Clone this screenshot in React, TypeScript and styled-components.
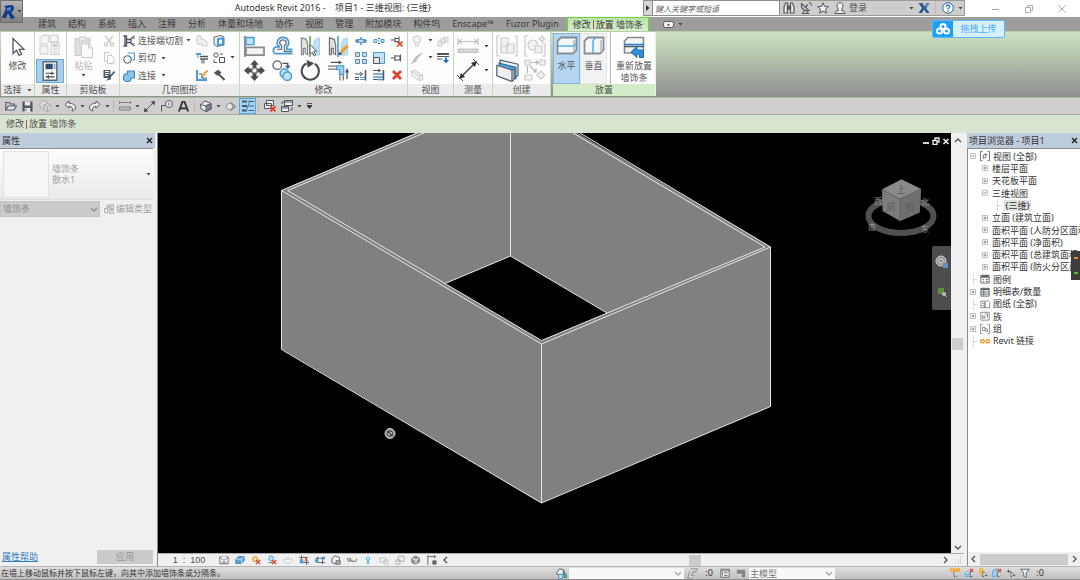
import React from "react";
import styled, { createGlobalStyle, css } from "styled-components";

const Global = createGlobalStyle`
  * { box-sizing: border-box; }
  body { margin: 0; overflow: hidden; }
  button, input, select { font: inherit; color: inherit; margin: 0; }
  body, button, input, select {
    font-family: "Noto Sans", "Noto Sans CJK SC", sans-serif;
    font-size: 9px;
    line-height: 12px;
    color: #505050;
  }
`;

/* ---------- colours shared by the drawings ---------- */
const K = "#4f5860";
const B = "#4a9bd4";
const L = "#bfe0f6";
const F = "#cbcbcb";
const P = "#f1f1f1";
const R = "#e0402f";
const O = "#f0a030";

/* ---------- drawings on a 12 x 12 grid ---------- */
const small: Record<string, React.ReactNode> = {
  cut: <g stroke={F} fill="none" strokeWidth="1.4"><path d="M2 1l6 7M10 1L4 8" /><circle cx="3" cy="9.5" r="1.6" /><circle cx="9" cy="9.5" r="1.6" /></g>,
  copy: <g stroke={F} fill="#fbfbfb"><path d="M1.500 .5h5l2 2v7h-7z" /><path d="M4.500 3.500h4l2.500 2.500v5.500h-6.500z" /></g>,
  brush: <g><path d="M.5 1h7v8h-7z" fill={K} /><path d="M2 2.500h4M2 4.500h4M2 6.500h3" stroke="#fff" /><path d="M11.500 2.500L7 8" stroke={K} strokeWidth="1.800" /><path d="M7.500 7L3 11.500l5-1z" fill={K} /></g>,
  cope: <g stroke={K} fill="none" strokeWidth="1.300"><path d="M.5 1h3v10h-3M2 1v10M3.500 4.500h3.500l4.500-3.500M3.500 7.500h3.500l4.500 3.500M8 4.500v3" /><path d="M11 3v1M11 8v1" /></g>,
  cutGeo: <g><path d="M4.500 1h7v7h-3" fill="#fff" stroke={B} strokeWidth="1.200" /><circle cx="4.500" cy="7.500" r="3.800" fill="#fff" stroke={K} /><path d="M4.500 3.500a4 4 0 014 4" stroke={B} fill="none" /></g>,
  join: <path d="M4.500 1h7v7H8.300A4 4 0 114.500 3.600z" fill="#8cc3ea" stroke="#3a87c0" strokeWidth="1.200" />,
  copeOff: <path d="M1 1h4v3h2l4 3v4H6V9H1z" fill={P} stroke={F} />,
  wallFace: <g><path d="M1 2l7-1.500 3 1.500v8l-7 1.500-3-2z" fill="#e4e9ed" stroke={K} strokeWidth=".8" /><path d="M4 3.500l7-1.500v8l-7 1.500z" fill={B} /><path d="M6 5l3-.5v4L6 9z" fill="#fff" /></g>,
  beam: <g stroke={K}><path d="M4 4.500h8M4 7h8" strokeWidth="1.400" /><path d="M6 8v3.500M8 8v3.500" /><path d="M0 2h5" stroke={B} strokeWidth="2" /><path d="M2 3v3" stroke={B} /></g>,
  split: <g fill="#fff" stroke={K}><circle cx="3" cy="3" r="2.200" /><path d="M6.500 5.500h5v5h-5z" /><path d="M1 7.500v3h3M7 2h3" fill="none" /></g>,
  paint: <g><path d="M1 1v10h10" fill="none" stroke={B} strokeWidth="2" /><path d="M3 5h3v4h5" stroke={K} fill="none" /><path d="M11.500 1.500L6 7.500" stroke={O} strokeWidth="2" /><path d="M6 7.500l-1.500 2 2-.8z" fill={K} /></g>,
  hammer: <g><path d="M.8 4L5 .5l3.500 3L5 7z" fill={K} /><path d="M5.500 5l6 6" stroke={K} strokeWidth="2" /></g>,
  splitEl: <g fill={L} stroke={B}><path d="M1.500 4.500h9v3h-9z" /><path d="M0 6h4M8 6h4" stroke={K} /><path d="M6 2v2.500M6 7.500v2.500" stroke={B} strokeWidth="1.500" /></g>,
  splitGap: <g fill={L} stroke={B}><path d="M1 4.500h3v3H1zM8 4.500h3v3H8z" /><path d="M5 3.500h2M5 8.500h2M5.500 6h1" stroke={K} fill="none" /></g>,
  unpin: <g><path d="M0 5h4M4 2.500v5M4 3.500h4M4 6.500h4M8 1.500v7" stroke={K} strokeWidth="1.100" /><path d="M6 6.500l5.500 5M11.500 6.500l-5.500 5" stroke={R} strokeWidth="1.600" /></g>,
  array: <g fill={L} stroke="#5d88a8"><path d="M.5.500h4v4h-4zM.5 7.500h4v4h-4z" /><path d="M7.500.500h4v4h-4zM7.500 7.500h4v4h-4z" /></g>,
  scale: <g><path d="M.5.500h11v11H.5z" fill={L} stroke={B} /><path d="M.5 5.500h6v6h-6z" fill="#e6e6e6" stroke={K} /></g>,
  pin: <g stroke={K} fill="#fff" strokeWidth="1.100"><path d="M0 6h4M4 3v6M4 4h5v4H4M9.500 2.500v7" /></g>,
  trimOne: <g><path d="M0 5h7M5 3l2.500 2L5 7" stroke={K} fill="none" /><path d="M5 8.500h5M5 10.500h5" stroke={B} strokeWidth="1.200" /><path d="M0 8.500h4M0 10.500h4" stroke={K} /><path d="M10.500 1v10.500" stroke={K} strokeWidth="1.500" /></g>,
  trimMany: <g><path d="M0 1.500h7M5 0l2.500 1.500L5 3" stroke={K} fill="none" /><path d="M4 5h6M4 8h6M4 10.500h6" stroke={B} strokeWidth="1.300" /><path d="M0 5h4M0 8h4M0 10.500h4" stroke={K} /><path d="M10.500 1v10.500" stroke={K} strokeWidth="1.500" /></g>,
  del: <path d="M2 2l8 8M10 2l-8 8" stroke={R} strokeWidth="2.800" />,
  bulb: <g stroke={F} fill={P}><circle cx="6" cy="4.500" r="3.700" /><path d="M4.500 8.500v2.500h3V8.500" /></g>,
  boxes: <g stroke={F} fill={P}><path d="M1 6h4v5H1zM4 3.500h4v5H4zM7 2h4v5H7z" /></g>,
  pen: <path d="M11.500.500L6 7l-2-1.500zM4 6L.5 11.500 6 8.500z" fill="#b9b9b9" stroke="#c4c4c4" />,
  thin: <g stroke={K}><path d="M0 2h12" strokeWidth="2" /><path d="M0 4.500h12" /><path d="M0 7h5" /><path d="M9 5.500v3" stroke="#1d72c4" strokeWidth="2" /><path d="M6 8h6l-3 3.500z" fill="#1d72c4" stroke="none" /></g>,
  wallOff: <path d="M.5 2l3-1 8 5v5l-3 .5-8-5zM.5 2l8 5v4.500M8.500 7l3-1" fill={P} stroke={F} />,
  open: <g fill="none" stroke={K} strokeWidth="1.100"><path d="M.8 10V2.500h3.500l1 1.500h4v2" /><path d="M.8 10l2.500-4h8.200l-2.700 4z" fill="#e8e8e8" /></g>,
  save: <g><path d="M.5 .5h11v11H.5z" fill={K} /><path d="M3 .5h6v4.500H3zM3 7.500h6V12H3z" fill="#e9e9e9" /><path d="M4.500 8.500v2.500" stroke={K} /></g>,
  sync: <g stroke="#aaa" fill="#d9d9d9"><circle cx="5" cy="5" r="4.300" /><path d="M5 5l3.500-1.500L12 5v4.500L8.500 11.500 5 9.500z" /><path d="M5 5l3.500 2L12 5M8.500 7v4.500" /></g>,
  undo: <path d="M1 4.500L5 1v2.300c4 0 6.500 1.700 6.500 4.400 0 1.800-1.500 3-3.500 3.300 1-1.500 1-4.500-3-4.500V8z" fill="#eee" stroke={K} />,
  redo: <path d="M11 4.500L7 1v2.300C3 3.300.5 5 .5 7.700c0 1.800 1.500 3 3.500 3.300-1-1.500-1-4.500 3-4.500V8z" fill="#eee" stroke={K} />,
  measure: <g stroke="#858585" fill="none"><path d="M.5 1v3M11.500 1v3M.5 2.500h11" /><path d="M.5 7h11v3H.5z" fill="#bbb" /></g>,
  dim: <g stroke={K} fill={K}><path d="M2 10l8-8" /><path d="M0 12l1-4 3 3zM12 0L8 1l3 3z" /></g>,
  tag: <g fill="#eee" stroke={K}><circle cx="8" cy="4" r="3.500" /><path d="M.5 11.500v-6h4M8 2.500v3" fill="none" /></g>,
  text: <path d="M1 11.500L5 .5h2l4 11M2.500 8h7" stroke="#333" strokeWidth="2" fill="none" />,
  house: <g stroke={K}><path d="M.5 4.500L5 1l6 2.500v5.500l-5 2.500-5-2.500z" fill="#eee" /><path d="M6 5.500l5-2v5.500l-5 2.500z" fill="#7c868e" /><path d="M.5 4.500L6 6" fill="none" /></g>,
  section: <g fill="#e8e8e8" stroke="#8a8a8a"><circle cx="5" cy="6" r="3.500" /><path d="M6 1.500L11 6l-5 4.500" fill="none" strokeWidth="1.500" /></g>,
  thinLines: <g stroke={K}><path d="M0 1.500h5M0 6h5M0 10.500h5" strokeWidth="2" /><path d="M6.500 1.500H12M6.500 6H12M6.500 10.500H12" /><path d="M8 0L4 12" stroke="#2e8ad0" /></g>,
  closeWin: <g><path d="M2.500.500h7v5h-7zM.5 3.500h7v5h-7z" fill="#eee" stroke={K} /><path d="M6.500 6.500l5 5M11.500 6.500l-5 5" stroke={R} strokeWidth="1.800" /></g>,
  switchWin: <g fill="#eee" stroke={K}><path d="M3.500.500h8v5h-8z" /><path d="M.5 6.500h7v5h-7zM1 4V2h2M11 7v3H9" /><path d="M3.500 2h8M.5 8h7" /></g>,
  binoc: <g fill="#eee" stroke={K} strokeWidth="1.200"><path d="M1 11V5l1.500-4h2v10zM11 11V5L9.500 1h-2v10z" /><path d="M4.500 4h3v3h-3z" fill={K} /></g>,
  dish: <g fill="none" stroke={K} strokeWidth="1.100"><path d="M1.500 1.500c-1 5 2.500 8 7.500 7zM5 5.500l3-3M9 .5a3 3 0 012.500 3M4 9l-1.500 2.500h6L6.500 9" /></g>,
  star: <path d="M6 .8l1.500 3.600 3.900.3-3 2.500 1 3.900L6 9l-3.400 2.100 1-3.900-3-2.500 3.900-.3z" fill="#eee" stroke={K} />,
  person: <g fill="#eee" stroke={K}><path d="M1 11.500c0-2 1.500-2.700 3.500-3L4 7C2 3.500 3.500.7 6 .7S10 3.500 8 7l-.5 1.500c2 .3 3.500 1 3.500 3z" /></g>,
  exchange: <g><path d="M.5 1h4l2 3.500L8.500 1h3L8 6l3.500 5h-3L6 7.500 4 11H.5L4 6z" fill="#2d5a94" /><path d="M7 3l4.500-2L9 6z" fill="#6a90bd" /></g>,
  help: <g><circle cx="6" cy="6" r="5.300" fill="#fff" stroke="#35618f" /><path d="M4.200 4.700C4.200 2.300 8 2.500 7.700 4.700 7.500 6 6 6 6 7.500M6 8.500V10" fill="none" stroke="#2377bd" strokeWidth="1.400" /></g>,
  editType: <g fill="#eee" stroke="#a2a2a2"><path d="M.5 5.500h4v5h-4zM3.500 1.500h3v3h-3zM7.500.500h4v5h-4zM6.500 6.500h5v5h-5zM8 8.500h2M8 3h2" /></g>,
  detail: <g stroke={K} fill="#fff"><path d="M1 2.500h10v8H1z" /><path d="M1 2.500l5 4 5-4M3 8.500h6" /></g>,
  solid: <g stroke="#2c73a8"><path d="M1 5l3-3h7v4.500l-3 3.500H1z" fill="#5ba5dc" /><path d="M1 5h7l3-3M8 5v5" fill="none" stroke="#d9efff" /></g>,
  sun: <g><circle cx="5" cy="5" r="2.800" fill="#fff2b8" stroke={O} strokeWidth="1.500" /><path d="M6 6l5 5M11 6l-5 5" stroke={R} strokeWidth="1.500" /></g>,
  shadow: <g><circle cx="5" cy="4" r="3" fill={L} stroke={B} /><path d="M2 9h5" stroke={K} /><path d="M6 6l5 5M11 6l-5 5" stroke={R} strokeWidth="1.500" /></g>,
  teapot: <path d="M2 5h7c2-2 3 1 1 3-1 2-5 3-7 1C0 8 0 5 2 5zM4 3h3" fill="#f4f4f4" stroke="#c4c4c4" />,
  crop: <g><path d="M3 0v9h9M0 3h9v9" stroke={K} fill="none" /><path d="M1 5h4v5H1z" fill={B} /><path d="M6 2l5 6M11 2L6 8" stroke={R} /></g>,
  cropShow: <g><path d="M3 2v7h9M1 4h8v7" stroke={K} fill="none" /><path d="M0 5h4v4H0zM8 2h4v3H8z" fill={B} /></g>,
  lock3d: <g fill="#eee" stroke={K}><path d="M1 4l4-3 5 2v5l-4 3-5-2z" /><path d="M6 7h5v4H6z" fill="#bbb" /></g>,
  glasses: <g fill="#fff" stroke={K}><path d="M.5 4.500h4v3h-3zM6.500 7.500h4l1-3M4.500 6l3 2" /></g>,
  lamp: <g><circle cx="6" cy="4.500" r="2" fill="#d8f2ff" stroke="#3aa7e0" /><path d="M6 7v3.500" stroke="#3aa7e0" strokeWidth="2" /></g>,
  ghostA: <g fill="#f4f4f4" stroke="#bcbcbc"><path d="M1 3.500h7v5H1zM6 6h5v5H6z" /></g>,
  ghostB: <g fill="#eee" stroke="#a8a8a8"><path d="M4 1.500h7v6H4zM1 6h5v5H1z" /></g>,
  cubeDark: <g stroke={K}><path d="M1 4l4-2.500 5 2v4.500L6 11 1 9z" fill="#9aa0a5" /><path d="M1 4l5 2 4-2.500M6 6v5" fill="none" stroke="#fff" /></g>,
  constrain: <g fill="none" stroke={K}><path d="M1 0v12M1 2h10M9 0v4" /><path d="M7 7h4v4H7z" fill="#777" /></g>,
  worksets: <g><path d="M1 5l3-4 4 1v5H1z" fill="#eee" stroke={K} /><path d="M3 7h4v4.500H3z" fill={L} stroke={B} /><path d="M9 3v8M11 6v5" stroke="#2a8e7d" strokeWidth="1.500" /></g>,
  reqs: <path d="M4 1h7L9.500 4H7L5 8h3M3 4L1 11h5" fill="#ddd" stroke="#9a9a9a" strokeWidth="1.400" />,
  option: <g fill="#f5f5f5" stroke={K}><path d="M1 1.500h10v9.500H1zM1 3.500h10M3 5v4M5 6h4M5 9h4" /></g>,
  optionAdd: <g><path d="M1 2h10v9H7V7H1z" fill="#858585" /><path d="M1 8h4v3" fill="#ccc" /></g>,
  selLink: <g><path d="M0 1h5v3H0zM7 1h5v3H7zM4 2h4" fill="#ffc23a" stroke={O} /><path d="M5 4v7l2-2 2 2" stroke={K} fill="#fff" /></g>,
  selUnder: <g><path d="M1 8l3-4 4 4zM1 10h6" fill="#d6eefc" stroke={B} /><path d="M7 1l4 4M11 1L7 5" stroke={R} strokeWidth="1.500" /><path d="M8 5v6l3-2" stroke={K} fill="#fff" /></g>,
  selPin: <g><path d="M2 1h4v5H2zM4 6v4" fill="#ffc23a" stroke={O} /><path d="M6 4v7l2-2h3z" stroke={K} fill="#fff" /></g>,
  selFace: <g><path d="M1 3l5-2v8l-5 2z" fill="#a5d4f4" stroke={B} /><path d="M7 1l4 4M11 1L7 5" stroke={R} strokeWidth="1.500" /><path d="M7 5v6l3-2" stroke={K} fill="#fff" /></g>,
  drag: <path d="M1 4h5M3 2v4M6 5v6l2-2h3z" stroke={K} fill="#fff" />,
  filter: <path d="M.8 1.500h10.400L7.500 6v5.500L4.500 10V6z" fill="#eee" stroke={K} />,
  treeViews: <g fill="none" stroke={K}><path d="M3 .5H.5v11H3M9 .5h2.500v11H9" /><path d="M4 5l3-1.500v4L4 9zM7 3.500L9 5" /></g>,
  treeLegend: <g fill="#fff" stroke={K}><path d="M1 1.500h10v9.500H1zM1 4h10" /><path d="M2 2.500h8" strokeWidth="2" /><path d="M3 6.500h2M7 6.500h3M3 9h2M7 9h3" /></g>,
  treeSched: <g fill="#fff" stroke={K}><path d="M1 1.500h10v9.500H1zM1 6h10M1 8.500h10M4.500 4v7" /><path d="M1 2.800h10" strokeWidth="2" /></g>,
  treeSheet: <g fill="#fff" stroke="#777"><path d="M1 2.500h5v8H1zM6 4l3-2.500 2.500 2.500v6.500H6zM2.500 5H5M2.500 8H5" /></g>,
  treeFam: <g fill="#fff" stroke="#777"><path d="M1 1.500h10v9.500H1zM3 8.500V6h3v2.500zM6 3.500h3V8" /></g>,
  treeGroup: <g fill="#fff" stroke="#777"><path d="M3 .5H.5v11H3M9 .5h2.500v11H9M3 4h3v4H3zM6 5l3 1v3L6 8" /></g>,
  treeLink: <g fill="none" stroke={O} strokeWidth="1.800"><path d="M5 4.500H2.500C0 4.500 0 8 2.500 8H5M7 4.500h2.500c2.500 0 2.500 3.500 0 3.500H7M4 6.200h4" /></g>,
};

/* ---------- drawings on a 22 x 22 grid ---------- */
const big: Record<string, React.ReactNode> = {
  cursor: <path d="M6 2.500v15l3.600-3.200 2.400 5.200 2.600-1.200-2.400-5h4.800z" fill="#fff" stroke="#555" strokeWidth="1.300" />,
  typeProps: <g fill="#f3f3f3" stroke={F}><path d="M2 3l2-2h6v7l-2 2H1V4zM11 3l2-2h6v7H11zM1 12h8v8H1z" /><path d="M12 8.500h8v12h-8zM14 15h4M14 18h4" /><path d="M14 10.500h4v2h-4z" fill={F} /></g>,
  props: <g><path d="M3.500.800h15v20.400h-15z" fill="#fff" stroke="#5a6670" strokeWidth="1.500" /><path d="M6 3h8v6H6z" fill="#2b4d72" /><path d="M15 3h2v6h-2z" fill="#8fa3b5" /><path d="M6 13.500h10M13 11.500v4M6 17.500h10M9 15.500v4" stroke="#444" strokeWidth="1.300" /></g>,
  paste: <g stroke={F} fill="#ececec"><path d="M2 2.500h15v17H2z" fill="#dedede" /><path d="M6 1h7v4H6z" /><path d="M8.500 8h7l4 4v9.500h-11z" fill="#fafafa" /><path d="M15.500 8v4h4" /></g>,
  align: <g><path d="M1 0v22" stroke={K} strokeWidth="1.300" /><path d="M2 1.500h8.500V9H2z" fill={L} stroke={B} strokeWidth="1.500" /><path d="M2 12h19v8H2z" fill="#f3f3f3" stroke="#8a8a8a" strokeWidth="1.800" /></g>,
  offset: <g fill="none"><path d="M21.500 14H15.500V11C19 9 18 1.500 11.500 1.500S4 9 7.500 11v.5H5C1 11.500 0 17.500 3.500 18.500H21.500" stroke={B} strokeWidth="1.800" /><path d="M21.500 16.200H13V9.500c3-1 2.500-5.500-1.500-5.500S7 8.500 10 9.500v4.500H5.500" stroke="#5d7788" strokeWidth="1.400" /></g>,
  mirrorPick: <g><path d="M1.500 2l5 1.500L8 9v10.500L5.500 18v-5h-2v6.500h-2z" fill="#e4e4e4" stroke="#888" strokeWidth="1.300" /><path d="M14 8l2-4.500L20.500 2v18h-3v-5h-2v5H13z" fill={L} stroke="#a4d2ef" /><path d="M10.500 0v22" stroke="#46a53c" strokeWidth="1.500" /><path d="M10.500 9v10l2.500-2 2 4 1.500-1-2-4h3z" fill="#fff" stroke="#555" /></g>,
  mirrorDraw: <g><path d="M1.500 2l5 1.500L8 9v10.500L5.500 18v-5h-2v6.500h-2z" fill="#e4e4e4" stroke="#777" strokeWidth="1.300" /><path d="M14 8l2-4.500L20.500 2v18h-7z" fill={L} stroke="#a4d2ef" /><path d="M10.500 0v22" stroke="#348dcc" strokeWidth="1.500" /><path d="M20.500 10l-7 7.500" stroke={O} strokeWidth="3.500" /><path d="M11 20.500l1-4 3 2.500z" fill="#444" /></g>,
  move: <g fill="#4a4a4a"><path d="M11 0l4.500 5H13v3H9V5H6.500zM11 22l4.500-5H13v-3H9v3H6.500zM0 11l5-4.500V9h3v4H5v2.500zM22 11l-5-4.500V9h-3v4h3v2.500z" /><path d="M8.500 8.500h5v5h-5z" fill="#fff" stroke="#4a4a4a" /></g>,
  copyBig: <g><circle cx="5.500" cy="5.500" r="4.500" fill="#fff" stroke="#777" strokeWidth="1.500" /><path d="M11 3.500h5.500V7" fill="none" stroke={K} strokeWidth="1.500" /><path d="M13.500 6h6l-3 3.500z" fill={K} /><circle cx="13" cy="14" r="4.500" fill={L} stroke={B} strokeWidth="1.500" /><circle cx="16" cy="17" r="4.500" fill={L} stroke={B} strokeWidth="1.500" /></g>,
  rotate: <g><path d="M15.500 4A9 9 0 117 3.500" fill="none" stroke="#4a4a4a" strokeWidth="2.200" /><path d="M7 0l8 3.500L8 8z" fill="#4a4a4a" /></g>,
  trim: <g><path d="M3 2.500h10" stroke={K} strokeWidth="1.300" /><path d="M11 .5l4 2L11 4.500z" fill={K} /><path d="M0 6.500h9M0 9.500h9M12.500 15v6.500M16 15v6.500" stroke="#777" strokeWidth="1.400" /><path d="M9 6h7.500v9h-4.500v-5H9z" fill="#9fd0f3" stroke={B} strokeWidth="1.200" /><path d="M20 20v-8" stroke={K} strokeWidth="1.400" /><path d="M17.800 13l2.200-5 2 5z" fill={K} /></g>,
  measureBig: <g stroke="#c2c2c2" fill="none"><path d="M1 3v7M21 3v7M2 6.500h18M5 4L2 6.500 5 9M17 4l3 2.500L17 9" strokeWidth="1.200" /><path d="M1 14h20v3.500H1z" fill="#d8d8d8" /></g>,
  dimBig: <g><path d="M3 19L19 3" stroke="#444" strokeWidth="1.400" /><path d="M2 20l2-6 4 4zM20 2l-6 2 4 4z" fill="#333" /><path d="M0 16l6 6M16 0l6 6" stroke="#444" /></g>,
  groupA: <g fill="#f1f1f1" stroke={F} strokeWidth="1.200"><path d="M4 1H1v20h3M18 1h3v20h-3" fill="none" /><path d="M5 3h7v8H5zM5 11h6v7H5zM11 9h7v9h-7z" /></g>,
  groupB: <g fill="#f1f1f1" stroke={F} strokeWidth="1.200"><path d="M4 1H1v20h3M18 9h3v12h-3" fill="none" /><circle cx="9" cy="10" r="5" /><path d="M11 11h7v7h-7z" /><circle cx="18" cy="4" r="2" /><path d="M18 0v2M18 6v2M14 4h2M20 4h2" /></g>,
  walls: <g strokeWidth="1.200"><path d="M4 1l17 4v11l-2 1L4 11z" fill="#f5f5f5" stroke="#59636b" /><path d="M3 4l16 4v11L4 12z" fill="#4da3e0" stroke="#2c73a8" /><path d="M.8 6l14.500 4.500 2-1v10l-2 2L.8 16z" fill="#eef0f1" stroke="#59636b" /><path d="M15.300 10.500v11" stroke="#59636b" /></g>,
  similar: <g fill="#f1f1f1" stroke={F} strokeWidth="1.200"><path d="M1 1h5v5H1zM16 1h5v5h-5zM1 16h7v5H1zM17 12l4 4-4 4-4-4z" /><path d="M7 3.500h7M12 1.500l2.500 2L12 5.500M3.500 7v7M6 7l6 6M12 10v3H9" fill="none" stroke="#b5b5b5" /></g>,
  horiz: <g><path d="M1.500 5L5 1.500h15.500V14L17 17.500H1.500z" fill="#f4f5f6" stroke="#858d94" strokeWidth="1.800" /><path d="M18 4v12" stroke="#c4c8cb" strokeWidth="2" /><path d="M2 10h16l2-2" stroke="#55b1ec" strokeWidth="1.600" fill="none" /></g>,
  vert: <g><path d="M1.500 5L5 1.500h15.500V14L17 17.500H1.500z" fill="#f4f5f6" stroke="#858d94" strokeWidth="1.800" /><path d="M18 4v12" stroke="#c4c8cb" strokeWidth="2" /><path d="M10 17V5l2-3" stroke="#55b1ec" strokeWidth="1.600" fill="none" /></g>,
  restart: <g><path d="M1.500 5L5 1.500h15.500V14L17 17H1.500z" fill="#f4f5f6" stroke="#858d94" strokeWidth="1.600" /><path d="M1 8.500h20" stroke="#2f7fc4" strokeWidth="1.500" /><path d="M1 10.500h20" stroke="#4b565f" strokeWidth="1.500" /><path d="M8 16L14 10.500v3.500h6.500V21.500h-4V18H14v3.500z" fill="#2f8fdc" stroke="#1f69ab" /></g>,
};

const Svg = styled.svg`
  display: block;
  flex: none;
`;

const Icon = ({ n, s = 12 }: { n: string; s?: number }) =>
  big[n] ? (
    <Svg width={s} height={s} viewBox="0 0 22 22" aria-hidden>{big[n]}</Svg>
  ) : (
    <Svg width={s} height={s} viewBox="0 0 12 12" aria-hidden>{small[n]}</Svg>
  );

const Caret = () => (
  <Svg width="5" height="3" viewBox="0 0 5 3" aria-hidden><path d="M.5 0h4l-2 2.600z" fill="#444" /></Svg>
);

const Chevron = ({ d }: { d: "up" | "down" | "left" | "right" }) => {
  const path = { up: "M1 5l3-3 3 3", down: "M1 3l3 3 3-3", left: "M5 1L2 4l3 3", right: "M3 1l3 3-3 3" }[d];
  return <Svg width="8" height="8" viewBox="0 0 8 8" aria-hidden><path d={path} fill="none" stroke="#555" strokeWidth="1.400" /></Svg>;
};

/* ---------- frame ---------- */
const Shell = styled.div`
  position: relative;
  display: flex;
  flex-direction: column;
  height: 100vh;
  background: #f0f0f0;
  white-space: nowrap;
`;

const plain = css`
  display: flex;
  align-items: center;
  justify-content: center;
  padding: 0;
  border: 0;
  background: none;
`;

const AppButton = styled.button`
  ${plain}
  position: absolute;
  z-index: 2;
  top: 0;
  left: 0;
  width: 23px;
  height: 23px;
  gap: 1px;
  border: 1px solid #6f6f6f;
  background: linear-gradient(#b4b4b4, #7f7f7f);
`;

const TitleBar = styled.header`
  display: flex;
  align-items: stretch;
  height: 17px;
  flex: none;
  padding-left: 23px;
  background: #fff;
`;

const Title = styled.h1`
  flex: 1;
  margin: 0;
  font-size: 9px;
  font-weight: 400;
  line-height: 16px;
  text-align: center;
  white-space: pre;
  color: #333;
`;

const SearchToggle = styled.button`
  ${plain}
  width: 10px;
  height: 16px;
  border: 1px solid #8f8f8f;
  background: #d5d5d5;
`;

const Search = styled.input`
  width: 127px;
  height: 16px;
  padding: 0 2px;
  border: 1px solid #8f8f8f;
  border-left: 0;
  background: #fff;
  font-size: 8px;
  &::placeholder { color: #666; font-style: italic; opacity: 1; }
`;

const InfoBar = styled.div`
  display: flex;
  align-items: center;
  width: 185px;
  height: 16px;
  border: 1px solid #9a9a9a;
  border-left: 0;
  background: #cdcdcd;
`;

const Tool = styled.button<{ $w?: number; $on?: boolean }>`
  ${plain}
  flex: none;
  width: ${(p) => p.$w ?? 17}px;
  height: 16px;
  ${(p) => p.$on && css`
    border: 1px solid #5da3dc;
    background: #a9d1f2;
  `}
`;

const Spring = styled.span`flex: 1;`;

const Rule = styled.span<{ $m?: number; $h?: number }>`
  flex: none;
  width: 1px;
  height: ${(p) => p.$h ?? 12}px;
  margin: 0 ${(p) => p.$m ?? 2}px;
  background: #b9b9b9;
`;

const WindowButtons = styled.div`
  display: flex;
  width: 115px;
  padding-left: 14px;
`;

const WindowButton = styled.button`
  ${plain}
  width: 33px;
`;

const Tabs = styled.nav`
  display: flex;
  flex: none;
  height: 14px;
  padding-left: 32px;
  background: #9d9d9d;
`;

const Tab = styled.button<{ $on?: boolean }>`
  ${plain}
  padding: 0 6px;
  color: #3b3b3b;
  ${(p) => p.$on && css`
    gap: 2px;
    margin-left: 2px;
    padding: 0 5px;
    border: 1px solid #5ee02c;
    border-width: 1px 1px 0;
    background: linear-gradient(#bfe0ad, #d8ecca);
  `}
`;

const RibbonToggle = styled.button`
  ${plain}
  gap: 4px;
  margin-left: 14px;
`;

const Upload = styled.button`
  ${plain}
  position: absolute;
  z-index: 3;
  top: 20px;
  right: 75px;
  height: 18px;
  width: 73px;
  overflow: hidden;
  border: 1px solid #5cb8fb;
  border-radius: 2px;
  background: #d6f0ff;
  color: #4dabf4;
`;

const UploadMark = styled.span`
  display: flex;
  align-items: center;
  justify-content: center;
  width: 20px;
  height: 18px;
  background: #1f9ffc;
`;

const UploadText = styled.span`flex: 1;`;

/* ---------- ribbon ---------- */
const Ribbon = styled.section`
  display: flex;
  flex: none;
  height: 67px;
  padding: 0 0 1px 1px;
  border-top: 1px solid #b5d0a5;
  border-bottom: 1px solid #a9bf9d;
  background: linear-gradient(#cce1c0, #b4c2ac 40%, #8f8f8f);
`;

const Panel = styled.section<{ $w: number; $green?: boolean }>`
  display: flex;
  flex-direction: column;
  flex: none;
  width: ${(p) => p.$w}px;
  margin-left: ${(p) => (p.$green ? 2 : 0)}px;
  border-right: 1px solid ${(p) => (p.$green ? "#e8f2e2" : "#c4d8ba")};
  background: #fdfdfd;
`;

const PanelBody = styled.div`
  display: flex;
  flex: 1;
  min-height: 0;
`;

const PanelLabel = styled.h2<{ $green?: boolean }>`
  display: flex;
  align-items: center;
  justify-content: center;
  gap: 5px;
  height: 12px;
  margin: 0;
  font-size: 9px;
  font-weight: 400;
  background: ${(p) => (p.$green ? "#d3ebc6" : "#ebebeb")};
`;

const TallButton = styled.button<{ $w: number; $on?: boolean; $soft?: boolean; $faint?: boolean }>`
  ${plain}
  flex-direction: column;
  justify-content: flex-start;
  align-self: flex-start;
  width: ${(p) => p.$w}px;
  height: 51px;
  margin-top: 1px;
  padding-top: 2px;
  gap: 2px;
  color: ${(p) => (p.$faint ? "#b9b9b9" : "#555")};
  border: 1px solid ${(p) => (p.$on ? "#7fb4e2" : p.$soft ? "#e4e4e4" : "transparent")};
  background: ${(p) => (p.$on ? "#b5d6f1" : p.$soft ? "#f3f3f3" : "transparent")};
`;

const Stack = styled.div`
  display: flex;
  flex-direction: column;
  justify-content: space-between;
  padding: 1px 0;
`;

const SquareButton = styled.button<{ $on?: boolean }>`
  ${plain}
  width: 28px;
  height: 24px;
  margin: 0 1px;
  border: 1px solid ${(p) => (p.$on ? "#6ca9dc" : "transparent")};
  background: ${(p) => (p.$on ? "#a9cfee" : "transparent")};
`;

const IconGrid = styled.div<{ $cols: string; $rows: number }>`
  display: grid;
  grid-template-columns: ${(p) => p.$cols};
  grid-template-rows: repeat(${(p) => p.$rows}, 1fr);
  align-items: center;
  justify-items: center;
  padding: ${(p) => (p.$rows === 2 ? 2 : 0)}px 0;
`;

const GridButton = styled.button`
  ${plain}
`;

const LabelButton = styled.button`
  ${plain}
  gap: 3px;
  height: 17px;
`;

const RowList = styled.div`
  display: flex;
  flex-direction: column;
  align-items: flex-start;
  justify-content: space-between;
  width: 73px;
  padding-left: 3px;
`;

const CaretGap = styled.span<{ $w: number }>`
  display: flex;
  justify-content: flex-end;
  width: ${(p) => p.$w}px;
`;

/* ---------- quick access and options ---------- */
const QuickBar = styled.div`
  display: flex;
  align-items: center;
  flex: none;
  height: 17px;
  padding-left: 2px;
  background: #cecece;
  border-bottom: 1px solid #a5aaa2;
`;

const OptionsBar = styled.div`
  display: flex;
  align-items: center;
  flex: none;
  gap: 2px;
  height: 18px;
  padding-left: 6px;
  background: #d8e4d0;
`;

const OptionRule = styled.span`
  width: 1px;
  height: 9px;
  background: #a05a5a;
`;

/* ---------- work area ---------- */
const Work = styled.main`
  display: flex;
  flex: 1;
  min-height: 0;
`;

const Side = styled.aside<{ $w: number }>`
  display: flex;
  flex-direction: column;
  flex: none;
  width: ${(p) => p.$w}px;
  min-width: 0;
`;

const SideHead = styled.header`
  display: flex;
  align-items: center;
  justify-content: space-between;
  flex: none;
  height: 15px;
  padding: 0 2px;
  background: #bfccdb;
  color: #333;
`;

const SideTitle = styled.h2`
  margin: 0;
  font-size: 9px;
  font-weight: 400;
`;

const TypePicker = styled.button`
  ${plain}
  justify-content: flex-start;
  flex: none;
  height: 52px;
  margin-right: 2px;
  padding: 2px 2px 2px 3px;
  border-top: 1px solid #8c8c8c;
  border-bottom: 1px solid #ddd;
  background: linear-gradient(#fdfdfd, #eaeaea);
  color: #a3a3a3;
  text-align: left;
`;

const Preview = styled.span`
  width: 46px;
  height: 47px;
  margin-right: 3px;
  border: 1px solid #e2e2e2;
  background: #f6f6f6;
`;

const TypeName = styled.span`
  flex: 1;
  line-height: 11px;
`;

const InstanceRow = styled.div`
  display: flex;
  align-items: center;
  flex: none;
  height: 17px;
  gap: 4px;
`;

const InstanceWrap = styled.span`
  position: relative;
  display: flex;
  align-items: center;
`;

const InstanceSelect = styled.select`
  width: 100px;
  height: 16px;
  padding: 0 2px;
  appearance: none;
  border: 1px solid #c3c3c3;
  border-radius: 0;
  background: #cbcbcb;
  color: #8b8b8b;
  opacity: 1;
`;

const SelectMark = styled.span`
  position: absolute;
  right: 2px;
  opacity: 0.5;
  pointer-events: none;
`;

const EditType = styled.button`
  ${plain}
  gap: 2px;
  color: #a0a0a0;
`;

const SideFoot = styled.footer`
  display: flex;
  align-items: center;
  justify-content: space-between;
  margin-top: auto;
  height: 18px;
  padding: 0 2px;
`;

const HelpLink = styled.a`
  color: #2f7fc0;
`;

const Apply = styled.button`
  ${plain}
  width: 56px;
  height: 14px;
  background: #cacaca;
  color: #979797;
`;

const View = styled.section`
  display: flex;
  flex: 1;
  flex-direction: column;
  min-width: 0;
  margin: 0 3px 0 2px;
  border-left: 1px solid #888;
`;

const ViewRow = styled.div`
  display: flex;
  flex: 1;
  min-height: 0;
`;

const Canvas = styled.div`
  position: relative;
  flex: 1;
  min-width: 0;
  overflow: hidden;
  background: #000;
`;

const Scene = styled.svg`
  display: block;
  width: 100%;
  height: 100%;
`;

const MdiButtons = styled.div`
  position: absolute;
  top: 3px;
  right: 0;
  display: flex;
`;

const MdiButton = styled.button`
  ${plain}
  width: 10px;
  height: 10px;
`;

const CubeBox = styled.div`
  position: absolute;
  top: 43px;
  right: 10px;
`;

const NavBar = styled.div`
  position: absolute;
  top: 113px;
  right: 0;
  display: flex;
  flex-direction: column;
  align-items: center;
  justify-content: space-around;
  width: 19px;
  height: 64px;
  border-radius: 2px 0 0 2px;
  background: #4d4d4d;
`;

const NavButton = styled.button`
  ${plain}
  width: 19px;
  height: 26px;
`;

const VScroll = styled.div`
  display: flex;
  flex: none;
  flex-direction: column;
  align-items: center;
  width: 13px;
  padding: 3px 0 1px;
  background: #f0f0f0;
`;

const VTrack = styled.div`
  display: flex;
  flex: 1;
  flex-direction: column;
  width: 11px;
`;

const Pad = styled.span<{ $grow: number }>`
  flex: ${(p) => p.$grow};
`;

const VThumb = styled.div`
  height: 12px;
  background: #cdcdcd;
`;

const ScrollButton = styled.button`
  ${plain}
  width: 12px;
  height: 10px;
`;

const ViewBar = styled.div`
  display: flex;
  align-items: center;
  flex: none;
  height: 13px;
  border-top: 1px solid #aaa;
`;

const Scale = styled.button`
  ${plain}
  width: 58px;
  padding-left: 4px;
  font-family: "Liberation Sans", sans-serif;
  font-size: 9px;
  white-space: pre;
`;

const ViewTool = styled.button`
  ${plain}
  flex: 0 1 16px;
  height: 12px;
`;

const HTrack = styled.div`
  display: flex;
  flex: 1;
  height: 11px;
`;

const HThumb = styled.div<{ $w?: number }>`
  flex: ${(p) => (p.$w ? `0 0 ${p.$w}px` : "1")};
  background: #cbcbcb;
`;

const Grip = styled.span`
  display: flex;
  justify-content: center;
  width: 13px;
`;

/* ---------- project browser ---------- */
const BrowserBody = styled.div`
  flex: 1;
  min-height: 0;
  overflow: hidden;
  border-top: 1px solid #8c8c8c;
  border-left: 1px solid #8c8c8c;
  background: #fff;
`;

const Tree = styled.ul`
  display: grid;
  grid-auto-rows: 1fr;
  height: 198px;
  margin: 0;
  padding: 1px 0 0 1px;
  list-style: none;
`;

const Node = styled.li<{ $level: number }>`
  display: flex;
  align-items: center;
  gap: 3px;
  padding-left: ${(p) => p.$level * 12}px;
  color: #333;
`;

const NodeBox = styled.span`
  display: flex;
  flex: none;
  justify-content: center;
  width: 8px;
`;

const NodeText = styled.span<{ $on?: boolean }>`
  line-height: 11px;
  ${(p) => p.$on && css`
    padding: 0 1px;
    background: #e2e2e2;
  `}
`;

const SideScroll = styled.div`
  display: flex;
  align-items: center;
  flex: none;
  height: 14px;
  border-left: 1px solid #8c8c8c;
`;

const SpeedBadge = styled.div`
  position: absolute;
  z-index: 3;
  right: 0;
  top: 251px;
  display: flex;
  flex-direction: column;
  align-items: center;
  justify-content: space-around;
  width: 9px;
  height: 29px;
  background: #3c3c3c;
`;

const Speck = styled.span<{ $c: string }>`
  width: 4px;
  height: 2px;
  background: ${(p) => p.$c};
`;

/* ---------- status ---------- */
const Status = styled.footer`
  display: flex;
  align-items: center;
  flex: none;
  height: 14px;
  border-top: 1px solid #b5b5b5;
  border-bottom: 1px solid #8d8d8d;
  background: linear-gradient(#dedede, #c0c0c0);
`;

const StatusText = styled.p`
  flex: 1;
  margin: 0;
  padding-left: 1px;
  font-size: 8px;
  color: #333;
`;

const StatusGroup = styled.div<{ $w: number }>`
  display: flex;
  align-items: center;
  flex: none;
  width: ${(p) => p.$w}px;
`;

const StatusWrap = styled.span`
  position: relative;
  display: flex;
  align-items: center;
`;

const StatusSelect = styled.select<{ $w: number }>`
  width: ${(p) => p.$w}px;
  height: 11px;
  padding: 0 1px;
  appearance: none;
  border: 0;
  border-radius: 0;
  background: #f8f8f8;
  color: #777;
  line-height: 11px;
`;

const Count = styled.span`
  width: 16px;
  text-align: center;
  color: #333;
`;

const tabs = ["建筑", "结构", "系统", "插入", "注释", "分析", "体量和场地", "协作", "视图", "管理", "附加模块", "构件坞", "Enscape™", "Fuzor Plugin"];

const modifyBig: [string, string][] = [
  ["align", "对齐"], ["offset", "偏移"], ["mirrorPick", "镜像 - 拾取轴"], ["mirrorDraw", "镜像 - 绘制轴"],
  ["move", "移动"], ["copyBig", "复制"], ["rotate", "旋转"], ["trim", "修剪/延伸为角"],
];
const modifySmall: [string, string][] = [
  ["splitEl", "拆分图元"], ["splitGap", "用间隙拆分"], ["unpin", "解锁"],
  ["array", "阵列"], ["scale", "缩放"], ["pin", "锁定"],
  ["trimOne", "修剪/延伸单个图元"], ["trimMany", "修剪/延伸多个图元"], ["del", "删除"],
];
const viewTools: [string, string][] = [
  ["detail", "详细程度"], ["solid", "视觉样式"], ["sun", "日光路径"], ["shadow", "阴影"], ["teapot", "渲染"],
  ["crop", "裁剪视图"], ["cropShow", "显示裁剪区域"], ["lock3d", "锁定三维视图"], ["glasses", "临时隐藏/隔离"],
  ["lamp", "显示隐藏的图元"], ["ghostA", "临时视图属性"], ["ghostB", "分析模型"], ["cubeDark", "位移集"], ["constrain", "显示约束"],
];

type TreeNode = { level: number; text: string; icon?: string; box?: "+" | "-"; on?: boolean };
const nodes: TreeNode[] = [
  { level: 0, text: "视图 (全部)", icon: "treeViews", box: "-" },
  { level: 1, text: "楼层平面", box: "+" },
  { level: 1, text: "天花板平面", box: "+" },
  { level: 1, text: "三维视图", box: "-" },
  { level: 2, text: "{三维}", on: true },
  { level: 1, text: "立面 (建筑立面)", box: "+" },
  { level: 1, text: "面积平面 (人防分区面积)", box: "+" },
  { level: 1, text: "面积平面 (净面积)", box: "+" },
  { level: 1, text: "面积平面 (总建筑面积)", box: "+" },
  { level: 1, text: "面积平面 (防火分区面积)", box: "+" },
  { level: 0, text: "图例", icon: "treeLegend" },
  { level: 0, text: "明细表/数量", icon: "treeSched", box: "+" },
  { level: 0, text: "图纸 (全部)", icon: "treeSheet" },
  { level: 0, text: "族", icon: "treeFam", box: "+" },
  { level: 0, text: "组", icon: "treeGroup", box: "+" },
  { level: 0, text: "Revit 链接", icon: "treeLink" },
];

const Expander = ({ box }: { box?: "+" | "-" }) => (
  <NodeBox>
    <Svg width="8" height="12" viewBox="0 0 8 12" aria-hidden>
      {box ? (
        <>
          <path d="M1.500 3.500h5v5h-5z" fill="#fff" stroke="#c0c0c0" />
          <path d={box === "+" ? "M2.500 6h3M4 4.500v3" : "M2.500 6h3"} stroke="#7a88ad" />
        </>
      ) : (
        <path d="M4.500 0v12M5 6.500h3" stroke="#dadada" fill="none" />
      )}
    </Svg>
  </NodeBox>
);

const CloseMark = () => (
  <Svg width="7" height="7" viewBox="0 0 7 7" aria-hidden><path d="M1 1l5 5M6 1L1 6" stroke="#222" strokeWidth="1.400" /></Svg>
);

const TitleRow = () => (
  <TitleBar>
    <Title>{"Autodesk Revit 2016 -    项目1 - 三维视图: {三维}"}</Title>
    <SearchToggle aria-label="展开搜索">
      <Svg width="4" height="6" viewBox="0 0 4 6" aria-hidden><path d="M0 0l3.500 3L0 6z" fill="#333" /></Svg>
    </SearchToggle>
    <Search aria-label="搜索" placeholder="键入关键字或短语" />
    <InfoBar>
      <Tool aria-label="搜索"><Icon n="binoc" /></Tool>
      <Tool aria-label="通讯中心"><Icon n="dish" /></Tool>
      <Tool aria-label="收藏夹"><Icon n="star" /></Tool>
      <Tool aria-label="用户"><Icon n="person" /></Tool>
      <Tool $w={20}>登录</Tool>
      <Spring />
      <Tool $w={8} aria-label="登录选项"><Caret /></Tool>
      <Tool aria-label="Exchange"><Icon n="exchange" /></Tool>
      <Rule $m={3} />
      <Tool aria-label="帮助"><Icon n="help" /></Tool>
      <Tool $w={8} aria-label="帮助选项"><Caret /></Tool>
    </InfoBar>
    <WindowButtons>
      <WindowButton aria-label="最小化"><Svg width="8" height="8" viewBox="0 0 8 8"><path d="M0 4.500h7" stroke="#aaa" /></Svg></WindowButton>
      <WindowButton aria-label="还原"><Svg width="8" height="8" viewBox="0 0 8 8"><path d="M.5 2.500h5v5h-5zM2.500 2V.5h5v5H6" stroke="#aaa" fill="none" /></Svg></WindowButton>
      <WindowButton aria-label="关闭"><Svg width="8" height="8" viewBox="0 0 8 8"><path d="M.5.500l7 7M7.500.500l-7 7" stroke="#aaa" /></Svg></WindowButton>
    </WindowButtons>
  </TitleBar>
);

const RibbonArea = () => (
  <Ribbon>
    <Panel $w={34}>
      <PanelBody><TallButton $w={33}><Icon n="cursor" s={22} />修改</TallButton></PanelBody>
      <PanelLabel>选择<Caret /></PanelLabel>
    </Panel>
    <Panel $w={32}>
      <PanelBody>
        <Stack>
          <SquareButton disabled aria-label="类型属性"><Icon n="typeProps" s={22} /></SquareButton>
          <SquareButton $on aria-label="属性"><Icon n="props" s={20} /></SquareButton>
        </Stack>
      </PanelBody>
      <PanelLabel>属性</PanelLabel>
    </Panel>
    <Panel $w={53}>
      <PanelBody>
        <TallButton $w={33} $faint><Icon n="paste" s={22} />粘贴<Caret /></TallButton>
        <IconGrid $cols="17px" $rows={3}>
          <GridButton disabled aria-label="剪切到剪贴板"><Icon n="cut" /></GridButton>
          <GridButton disabled aria-label="复制到剪贴板"><Icon n="copy" /></GridButton>
          <GridButton aria-label="匹配类型属性"><Icon n="brush" /></GridButton>
        </IconGrid>
      </PanelBody>
      <PanelLabel>剪贴板</PanelLabel>
    </Panel>
    <Panel $w={120}>
      <PanelBody>
        <RowList>
          <LabelButton><Icon n="cope" />连接端切割<CaretGap $w={5}><Caret /></CaretGap></LabelButton>
          <LabelButton><Icon n="cutGeo" />剪切<CaretGap $w={7}><Caret /></CaretGap></LabelButton>
          <LabelButton><Icon n="join" />连接<CaretGap $w={7}><Caret /></CaretGap></LabelButton>
        </RowList>
        <IconGrid $cols="17px 17px 10px" $rows={3}>
          <GridButton disabled aria-label="取消连接端切割"><Icon n="copeOff" /></GridButton>
          <GridButton aria-label="拆分面"><Icon n="wallFace" /></GridButton>
          <span />
          <GridButton aria-label="梁/柱连接"><Icon n="beam" /></GridButton>
          <GridButton aria-label="填色"><Icon n="split" /></GridButton>
          <Caret />
          <GridButton aria-label="墙连接"><Icon n="paint" /></GridButton>
          <GridButton aria-label="拆除"><Icon n="hammer" /></GridButton>
        </IconGrid>
      </PanelBody>
      <PanelLabel>几何图形</PanelLabel>
    </Panel>
    <Panel $w={168}>
      <PanelBody>
        <IconGrid $cols="repeat(4, 28px)" $rows={2}>
          {modifyBig.map(([n, t]) => <GridButton key={n} aria-label={t}><Icon n={n} s={21} /></GridButton>)}
        </IconGrid>
        <IconGrid $cols="repeat(3, 18px)" $rows={3}>
          {modifySmall.map(([n, t]) => <GridButton key={n} aria-label={t}><Icon n={n} /></GridButton>)}
        </IconGrid>
      </PanelBody>
      <PanelLabel>修改</PanelLabel>
    </Panel>
    <Panel $w={46}>
      <PanelBody>
        <IconGrid $cols="18px 8px 18px" $rows={3}>
          <GridButton disabled aria-label="在视图中隐藏"><Icon n="bulb" /></GridButton>
          <Caret />
          <GridButton disabled aria-label="置换图元"><Icon n="boxes" /></GridButton>
          <GridButton disabled aria-label="替换视图中的图形"><Icon n="pen" /></GridButton>
          <Caret />
          <GridButton aria-label="线处理"><Icon n="thin" /></GridButton>
          <GridButton disabled aria-label="选择框"><Icon n="wallOff" /></GridButton>
        </IconGrid>
      </PanelBody>
      <PanelLabel>视图</PanelLabel>
    </Panel>
    <Panel $w={39}>
      <PanelBody>
        <IconGrid $cols="27px 10px" $rows={2}>
          <GridButton disabled aria-label="测量"><Icon n="measureBig" s={22} /></GridButton>
          <Caret />
          <GridButton aria-label="尺寸标注"><Icon n="dimBig" s={22} /></GridButton>
          <Caret />
        </IconGrid>
      </PanelBody>
      <PanelLabel>测量</PanelLabel>
    </Panel>
    <Panel $w={58}>
      <PanelBody>
        <IconGrid $cols="28px 27px" $rows={2}>
          <GridButton disabled aria-label="创建部件"><Icon n="groupA" s={22} /></GridButton>
          <GridButton disabled aria-label="创建零件"><Icon n="groupB" s={22} /></GridButton>
          <GridButton aria-label="创建组"><Icon n="walls" s={23} /></GridButton>
          <GridButton disabled aria-label="创建类似"><Icon n="similar" s={22} /></GridButton>
        </IconGrid>
      </PanelBody>
      <PanelLabel>创建</PanelLabel>
    </Panel>
    <Panel $w={103} $green>
      <PanelBody>
        <TallButton $w={27} $on><Icon n="horiz" s={22} />水平</TallButton>
        <TallButton $w={27} $soft><Icon n="vert" s={22} />垂直</TallButton>
        <Rule $m={3} $h={52} />
        <TallButton $w={40}><Icon n="restart" s={22} /><span>重新放置<br />墙饰条</span></TallButton>
      </PanelBody>
      <PanelLabel $green>放置</PanelLabel>
    </Panel>
  </Ribbon>
);

const QuickAccess = () => (
  <QuickBar>
    <Tool aria-label="打开"><Icon n="open" /></Tool>
    <Tool aria-label="保存"><Icon n="save" s={11} /></Tool>
    <Tool aria-label="同步"><Icon n="sync" /></Tool>
    <Tool $w={8} aria-label="同步选项"><Caret /></Tool>
    <Tool aria-label="放弃"><Icon n="undo" /></Tool>
    <Tool $w={8} aria-label="放弃列表"><Caret /></Tool>
    <Tool aria-label="重做"><Icon n="redo" /></Tool>
    <Tool $w={8} aria-label="重做列表"><Caret /></Tool>
    <Rule />
    <Tool aria-label="测量"><Icon n="measure" /></Tool>
    <Tool $w={8} aria-label="测量选项"><Caret /></Tool>
    <Tool aria-label="对齐尺寸标注"><Icon n="dim" s={11} /></Tool>
    <Tool aria-label="按类别标记"><Icon n="tag" /></Tool>
    <Tool aria-label="文字"><Icon n="text" s={11} /></Tool>
    <Rule />
    <Tool aria-label="默认三维视图"><Icon n="house" /></Tool>
    <Tool $w={8} aria-label="三维视图选项"><Caret /></Tool>
    <Tool aria-label="剖面"><Icon n="section" s={11} /></Tool>
    <Tool $on aria-label="细线"><Icon n="thinLines" /></Tool>
    <Rule />
    <Tool aria-label="关闭隐藏窗口"><Icon n="closeWin" /></Tool>
    <Tool aria-label="切换窗口"><Icon n="switchWin" /></Tool>
    <Tool $w={8} aria-label="窗口列表"><Caret /></Tool>
    <Tool $w={12} aria-label="自定义快速访问工具栏">
      <Svg width="7" height="6" viewBox="0 0 7 6"><path d="M1 .5h5M1 2.500h5L3.500 5.500z" stroke="#333" strokeWidth=".8" fill="#333" /></Svg>
    </Tool>
  </QuickBar>
);

const Properties = () => (
  <Side $w={155}>
    <SideHead><SideTitle>属性</SideTitle><GridButton aria-label="关闭属性"><CloseMark /></GridButton></SideHead>
    <TypePicker aria-label="类型选择器">
      <Preview />
      <TypeName>墙饰条<br />散水1</TypeName>
      <Caret />
    </TypePicker>
    <InstanceRow>
      <InstanceWrap>
        <InstanceSelect disabled aria-label="属性过滤器"><option>墙饰条</option></InstanceSelect>
        <SelectMark><Chevron d="down" /></SelectMark>
      </InstanceWrap>
      <EditType disabled><Icon n="editType" s={10} />编辑类型</EditType>
    </InstanceRow>
    <SideFoot><HelpLink href="#help">属性帮助</HelpLink><Apply disabled>应用</Apply></SideFoot>
  </Side>
);

const Model = () => (
  <Scene viewBox="0 0 793 420" preserveAspectRatio="xMidYMid slice" role="img" aria-label="三维模型">
    <path d="M123.500 57L352 -40 612.500 113.500V273.500L383 370 123.500 216z" fill="#808080" />
    <path d="M352.500 123L287 150.500 383.500 207.500 449 180z" fill="#000" />
    <g fill="none" stroke="#e6e6e6">
      <path d="M259 0L123.500 57.500V216.500L383.500 370 612.500 273.500V114L422 0" />
      <path d="M266 0L129.500 57.500 383.500 207.500 607 114 415 0" />
      <path d="M123.500 57.500L383.500 211 612.500 114M383.500 211V370" />
      <path d="M352.500 0V123L287 150.500M352.500 123L449 180" />
    </g>
    <g>
      <circle cx="232" cy="300.500" r="5" fill="#999" stroke="#c9c9c9" />
      <circle cx="232" cy="300.500" r="2.500" fill="#ddd" stroke="#333" />
      <path d="M229.500 298l5 5" stroke="#333" strokeWidth="1.300" />
    </g>
  </Scene>
);

const ViewCube = () => (
  <CubeBox>
    <Svg width="80" height="66" viewBox="0 0 80 66" role="img" aria-label="ViewCube">
      <ellipse cx="40" cy="40" rx="32.500" ry="17" fill="none" stroke="#505050" strokeWidth="6" />
      <path d="M21 13.500L40.500 3.500 60 13 58.500 36.500 39 45 21.500 35z" fill="#7c7c7c" />
      <path d="M21 13.500L40.500 3.500 60 13 39 23z" fill="#8a8a8a" />
      <path d="M39 23L60 13 58.500 36.500 39 45z" fill="#6e6e6e" />
      <path d="M21 13.500L39 23 60 13M39 23v22" fill="none" stroke="#626262" />
      <g fontSize="9" textAnchor="middle" fill="#5a5a5a">
        <text x="40" y="17">上</text>
        <text x="30" y="34">前</text>
        <text x="49" y="34">右</text>
      </g>
      <g fontSize="8" textAnchor="middle" fill="#9a9a9a">
        <text x="11" y="54">南</text>
        <text x="64" y="56">东</text>
        <text x="17" y="28">西</text>
        <text x="64" y="29">北</text>
      </g>
    </Svg>
  </CubeBox>
);

const Viewport = () => (
  <View>
    <ViewRow>
      <Canvas>
        <Model />
        <MdiButtons>
          <MdiButton aria-label="最小化视图"><Svg width="8" height="8" viewBox="0 0 8 8"><path d="M1 6h6" stroke="#eee" strokeWidth="1.800" /></Svg></MdiButton>
          <MdiButton aria-label="还原视图"><Svg width="8" height="8" viewBox="0 0 8 8"><path d="M1 3.500h4v4H1zM3 3V1h4v4H5" stroke="#eee" strokeWidth="1.300" fill="none" /></Svg></MdiButton>
          <MdiButton aria-label="关闭视图"><Svg width="8" height="8" viewBox="0 0 8 8"><path d="M1.500 2l5 5M6.500 2l-5 5" stroke="#eee" strokeWidth="1.600" /></Svg></MdiButton>
        </MdiButtons>
        <ViewCube />
        <NavBar>
          <NavButton aria-label="导航控制盘">
            <Svg width="16" height="16" viewBox="0 0 16 16"><circle cx="7" cy="7" r="5" fill="#999" stroke="#ccc" /><circle cx="7" cy="7" r="2" fill="#777" stroke="#ddd" /><path d="M9 9h5v5H9z" fill="#5f93c4" /></Svg>
          </NavButton>
          <NavButton aria-label="区域放大">
            <Svg width="16" height="16" viewBox="0 0 16 16"><path d="M4 2h6v6H4z" fill="#5a8f3c" /><circle cx="10" cy="8" r="2" fill="#bbb" /><path d="M11 9l2 2" stroke="#bbb" /></Svg>
          </NavButton>
        </NavBar>
      </Canvas>
      <VScroll>
        <ScrollButton aria-label="向上滚动"><Chevron d="up" /></ScrollButton>
        <VTrack><Pad $grow={192} /><VThumb /><Pad $grow={193} /></VTrack>
        <ScrollButton aria-label="向下滚动"><Chevron d="down" /></ScrollButton>
      </VScroll>
    </ViewRow>
    <ViewBar>
      <Scale>{"1  :  100"}</Scale>
      {viewTools.map(([n, t]) => <ViewTool key={n} aria-label={t}><Icon n={n} s={10} /></ViewTool>)}
      <ScrollButton aria-label="向左滚动"><Chevron d="left" /></ScrollButton>
      <HTrack><Pad $grow={237} /><HThumb $w={12} /><Pad $grow={239} /></HTrack>
      <ScrollButton aria-label="向右滚动"><Chevron d="right" /></ScrollButton>
      <Grip><Svg width="8" height="8" viewBox="0 0 8 8" aria-hidden><path d="M6 1h1M4 4h1M6 4h1M1 7h1M4 7h1M6 7h1" stroke="#aaa" /></Svg></Grip>
    </ViewBar>
  </View>
);

const Browser = () => (
  <Side $w={113}>
    <SideHead><SideTitle>项目浏览器 - 项目1</SideTitle><GridButton aria-label="关闭项目浏览器"><CloseMark /></GridButton></SideHead>
    <BrowserBody>
      <Tree>
        {nodes.map((n) => (
          <Node key={n.text} $level={n.level}>
            <Expander box={n.box} />
            {n.icon && <Icon n={n.icon} s={10} />}
            <NodeText $on={n.on}>{n.text}</NodeText>
          </Node>
        ))}
      </Tree>
    </BrowserBody>
    <SideScroll>
      <ScrollButton aria-label="向左滚动"><Chevron d="left" /></ScrollButton>
      <HTrack><HThumb /></HTrack>
      <ScrollButton aria-label="向右滚动"><Chevron d="right" /></ScrollButton>
    </SideScroll>
  </Side>
);

const StatusBar = () => (
  <Status>
    <StatusText>在墙上移动鼠标并按下鼠标左键，向其中添加墙饰条或分隔条。</StatusText>
    <StatusGroup $w={395}>
      <Tool $w={16} aria-label="工作集"><Icon n="worksets" s={11} /></Tool>
      <StatusWrap>
        <StatusSelect $w={115} aria-label="活动工作集"><option /></StatusSelect>
        <SelectMark><Chevron d="down" /></SelectMark>
      </StatusWrap>
      <Tool aria-label="编辑请求"><Icon n="reqs" s={11} /></Tool>
      <Count>:0</Count>
      <Tool $w={16} aria-label="设计选项"><Icon n="option" s={10} /></Tool>
      <Tool $w={16} aria-label="添加到集"><Icon n="optionAdd" s={10} /></Tool>
      <StatusWrap>
        <StatusSelect $w={86} aria-label="活动设计选项"><option>主模型</option></StatusSelect>
        <SelectMark><Chevron d="down" /></SelectMark>
      </StatusWrap>
    </StatusGroup>
    <StatusGroup $w={132}>
      {([["selLink", "选择链接"], ["selUnder", "选择基线图元"], ["selPin", "选择锁定图元"], ["selFace", "按面选择图元"], ["drag", "选择时拖曳图元"], ["filter", "过滤器"]] as const).map(([n, t]) => (
        <Tool key={n} $w={14} aria-label={t}><Icon n={n} s={10} /></Tool>
      ))}
      <Count>:0</Count>
    </StatusGroup>
  </Status>
);

export default function App() {
  return (
    <Shell>
      <Global />
      <AppButton aria-label="应用程序菜单">
        <Svg width="14" height="16" viewBox="0 0 14 16" aria-hidden>
          <path d="M2 2l7-1c4 0 4 6 0 7l4 6-4 1-3-6-2 5H0l4-10z" fill="#12398a" />
          <path d="M5 4l4-1v3L5 7z" fill="#5b87d0" />
        </Svg>
        <Caret />
      </AppButton>
      <TitleRow />
      <Tabs>
        {tabs.map((t) => <Tab key={t}>{t}</Tab>)}
        <Tab $on>修改<OptionRule />放置 墙饰条</Tab>
        <RibbonToggle aria-label="最小化功能区">
          <Svg width="11" height="7" viewBox="0 0 11 7"><rect x=".5" y=".5" width="10" height="6" rx="2" fill="#f4f4f4" stroke="#555" /><path d="M4 4.500h3L5.500 2.500z" fill="#333" /></Svg>
          <Caret />
        </RibbonToggle>
      </Tabs>
      <Upload>
        <UploadMark>
          <Svg width="14" height="12" viewBox="0 0 14 12" aria-hidden><g fill="none" stroke="#fff" strokeWidth="2"><circle cx="7" cy="3.500" r="2.500" /><circle cx="3.500" cy="8" r="2.500" /><circle cx="10.500" cy="8" r="2.500" /></g></Svg>
        </UploadMark>
        <UploadText>拖拽上传</UploadText>
      </Upload>
      <RibbonArea />
      <QuickAccess />
      <OptionsBar>修改<OptionRule />放置 墙饰条</OptionsBar>
      <Work>
        <Properties />
        <Viewport />
        <Browser />
      </Work>
      <SpeedBadge><Speck $c="#e08a3a" /><Speck $c="#4fc23a" /></SpeedBadge>
      <StatusBar />
    </Shell>
  );
}
